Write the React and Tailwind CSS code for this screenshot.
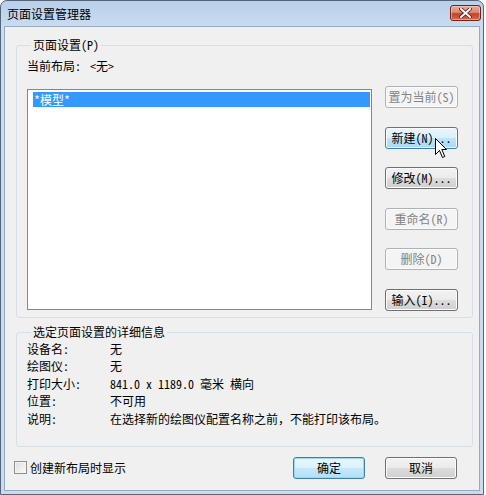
const FONT = "font-['Noto_Sans_Mono_CJK_SC','Noto_Sans_CJK_SC',sans-serif]";

const Btn = ({ children, state = "normal", className = "", extra = null }) => {
  const looks = {
    normal:
      "border-[#707070] text-black bg-[linear-gradient(#f2f2f2_0%,#ebebeb_50%,#dddddd_50%,#cfcfcf_100%)] shadow-[inset_0_0_0_1px_#fcfcfc]",
    hover:
      "border-[#3c7fb1] text-black bg-[linear-gradient(#eaf6fd_0%,#d9f0fc_50%,#bee6fd_50%,#a7d9f5_100%)] shadow-[inset_0_0_0_1px_#fcfcfc]",
    primary:
      "border-[#3c7fb1] text-black bg-[linear-gradient(#eaf6fd_0%,#dcf1fc_50%,#c6e8fb_50%,#b3def6_100%)] shadow-[inset_0_0_0_1px_#9ed6f5]",
    disabled: "border-[#adb2b5] text-[#838383] bg-[#f4f4f4] shadow-[inset_0_0_0_1px_#fcfcfc]",
  };
  return (
    <div
      className={`relative h-[22px] flex items-center justify-center rounded-[3px] border text-[12px] leading-[14px] ${looks[state]} ${className}`}
    >
      {children}
      {extra}
    </div>
  );
};

const Cursor = () => (
  <svg
    className="absolute left-[49px] top-[10px]"
    width="13"
    height="21"
    viewBox="0 0 13 21"
  >
    <path
      d="M0.5 0.5 L0.5 16.5 L4.5 12.5 L7.5 19.5 L9.8 18.5 L6.8 11.5 L11.5 11.5 Z"
      fill="#fff"
      stroke="#000"
      strokeWidth="1"
      strokeLinejoin="miter"
    />
  </svg>
);

const CloseButton = () => (
  <div className="w-[31px] h-[16px] mt-[-2px] rounded-[3px] border border-[#6e2219] bg-[linear-gradient(#e9a99b_0%,#dc8a74_45%,#c5432b_55%,#d46a4f_100%)] shadow-[inset_0_0_0_1px_rgba(255,220,210,0.5)] flex items-center justify-center">
    <svg width="13" height="10" viewBox="0 0 13 10">
      <path d="M2 1 L11 9 M11 1 L2 9" stroke="#5b1d14" strokeWidth="3.6" strokeLinecap="square" />
      <path d="M2 1 L11 9 M11 1 L2 9" stroke="#ffffff" strokeWidth="2" strokeLinecap="square" />
    </svg>
  </div>
);

const details = [
  ["设备名:", "无"],
  ["绘图仪:", "无"],
  ["打印大小:", "841.0 x 1189.0 毫米 横向"],
  ["位置:", "不可用"],
  ["说明:", "在选择新的绘图仪配置名称之前，不能打印该布局。"],
];

export default function App() {
  return (
    <div className={`w-[486px] h-[495px] bg-white ${FONT} text-[12px] leading-[14px] text-black`}>
      <div className="w-[484px] h-[495px] flex flex-col rounded-t-[7px] border border-[#55657a] bg-[linear-gradient(#b8d0ea_0px,#c9dcf0_25px,#c9dbee_100%)]">
        {/* title bar */}
        <div className="h-[25px] flex items-center justify-between pl-[6px] pr-[2px]">
          <span className="text-[12px] leading-[14px]">页面设置管理器</span>
          <CloseButton />
        </div>

        {/* client area */}
        <div className="flex-1 mx-[3px] mb-[3px] border border-[#97abc4] bg-[#f0f0f0] flex flex-col">
          {/* page setups group */}
          <fieldset className="mt-[11px] ml-[11px] mr-[6px] border border-[#d5dfe5] rounded-[3px] pl-[10px] pr-[14px] pb-[6px]">
            <legend className="ml-[4px] px-[2px] leading-[14px]">页面设置(P)</legend>
            <div className="mt-[7px] h-[14px] flex">
              <span>当前布局:</span>
              <span className="ml-[9px]">&lt;无&gt;</span>
            </div>
            <div className="mt-[13px] flex items-start">
              <div className="mt-[3px] w-[345px] h-[221px] border border-[#828790] bg-white pt-[2px] pl-[5px] pr-[1px]">
                <div className="h-[15px] bg-[#3399ff] text-white pl-[1px] flex items-center">*模型*</div>
              </div>
              <div className="ml-[13px] w-[73px] flex flex-col">
                <Btn state="disabled">置为当前(S)</Btn>
                <Btn state="hover" className="mt-[19px]" extra={<Cursor />}>新建(N)...</Btn>
                <Btn className="mt-[18px]">修改(M)...</Btn>
                <Btn state="disabled" className="mt-[19px]">重命名(R)</Btn>
                <Btn state="disabled" className="mt-[18px]">删除(D)</Btn>
                <Btn className="mt-[19px]">输入(I)...</Btn>
              </div>
            </div>
          </fieldset>

          {/* details group */}
          <fieldset className="mt-[7px] ml-[11px] mr-[6px] border border-[#d5dfe5] rounded-[3px] pl-[10px] pb-[18px]">
            <legend className="ml-[4px] px-[2px] leading-[14px]">选定页面设置的详细信息</legend>
            <div className="mt-[1px] flex flex-col">
              {details.map(([k, v]) => (
                <div key={k} className="h-[17.5px] flex items-center">
                  <span className="w-[83px]">{k}</span>
                  <span>{v}</span>
                </div>
              ))}
            </div>
          </fieldset>

          {/* bottom row */}
          <div className="mt-[10px] flex items-center">
            <div className="ml-[9px] w-[13px] h-[13px] border border-[#8e8f8f] bg-[linear-gradient(135deg,#dcdcdc,#fbfbfb)] shadow-[inset_0_0_0_1px_#f4f4f4]" />
            <span className="ml-[3px]">创建新布局时显示</span>
            <Btn state="primary" className="ml-auto w-[72px]">确定</Btn>
            <Btn className="ml-[20px] mr-[22px] w-[72px]">取消</Btn>
          </div>
        </div>
      </div>
    </div>
  );
}
